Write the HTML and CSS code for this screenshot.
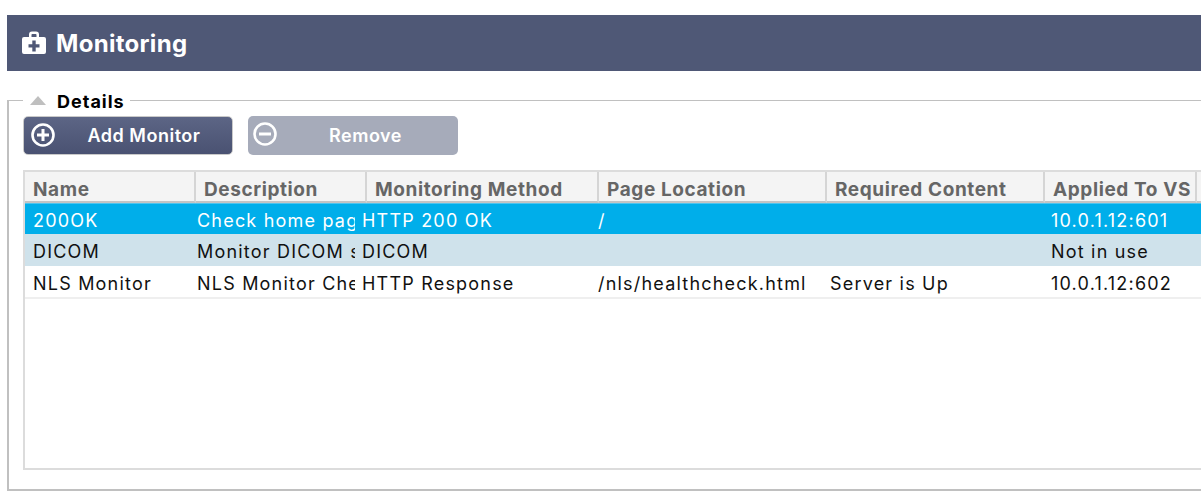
FILE: index.html
```html
<!DOCTYPE html>
<html lang="en">
<head>
<meta charset="utf-8">
<title>Monitoring</title>
<link rel="stylesheet" href="styles.css">
</head>
<body>
<header class="title-bar">
  <svg class="title-icon" viewBox="0 0 24 24" width="24" height="24"><path fill="#fff" fill-rule="evenodd" d="M7 3.500A3 3 0 0 1 10 .5h4a3 3 0 0 1 3 3V6h5a2 2 0 0 1 2 2v13a2 2 0 0 1-2 2H2a2 2 0 0 1-2-2V8a2 2 0 0 1 2-2h5V3.500zM9.500 6h5V3.800a.8.8 0 0 0-.8-.8h-3.400a.8.8 0 0 0-.8.8V6zM10.300 9.500v3.700H6.500v3.400h3.800v3.900h3.400v-3.900h3.800v-3.400h-3.800V9.500h-3.400z"/></svg>
  <h1 class="title-text">Monitoring</h1>
</header>
<fieldset class="details">
  <legend class="details-legend"><span class="arrow"></span><span class="legend-text">Details</span></legend>
  <div class="toolbar">
    <button class="btn btn-primary" type="button">
      <svg class="btn-icon" viewBox="0 0 24 24" width="24" height="24"><circle cx="12" cy="12" r="10.500" fill="none" stroke="#fff" stroke-width="2.600"/><path d="M12 6v12M6 12h12" stroke="#fff" stroke-width="3" fill="none"/></svg>
      <span class="btn-label add-label">Add Monitor</span>
    </button>
    <button class="btn btn-disabled" type="button">
      <svg class="btn-icon" viewBox="0 0 24 24" width="24" height="24"><circle cx="12" cy="12" r="10.500" fill="none" stroke="#fff" stroke-width="2.600"/><path d="M6 12h12" stroke="#fff" stroke-width="3" fill="none"/></svg>
      <span class="btn-label remove-label">Remove</span>
    </button>
  </div>
  <div class="grid-box">
    <table class="grid grid-head">
      <colgroup>
        <col class="h1"><col class="h2"><col class="h3"><col class="h4"><col class="h5"><col class="h6"><col class="h7">
      </colgroup>
      <thead>
        <tr><th>Name</th><th>Description</th><th>Monitoring Method</th><th>Page Location</th><th>Required Content</th><th>Applied To VS</th><th></th></tr>
      </thead>
    </table>
    <table class="grid grid-body">
      <colgroup>
        <col class="b1"><col class="b2"><col class="b3"><col class="b4"><col class="b5"><col class="b6">
      </colgroup>
      <tbody>
        <tr class="selected"><td>200OK</td><td>Check home page</td><td>HTTP 200 OK</td><td>/</td><td></td><td>10.0.1.12:601</td></tr>
        <tr class="alt"><td>DICOM</td><td>Monitor DICOM service</td><td>DICOM</td><td></td><td></td><td>Not in use</td></tr>
        <tr><td>NLS Monitor</td><td>NLS Monitor Check</td><td>HTTP Response</td><td>/nls/healthcheck.html</td><td>Server is Up</td><td>10.0.1.12:602</td></tr>
      </tbody>
    </table>
  </div>
</fieldset>
</body>
</html>
```
FILE: styles.css
```css
html, body {
  margin: 0;
  padding: 0;
  height: 502px;
  overflow: hidden;
  background: #fff;
  font-family: "Inter", "Liberation Sans", sans-serif;
}
body {
  padding: 15px 0 0 7px;
  box-sizing: border-box;
  width: 1201px;
}
.title-bar {
  display: flex;
  align-items: center;
  height: 56px;
  padding-left: 15px;
  gap: 10px;
  background: #4f5876;
  color: #fff;
}
.title-icon { flex: none; }
.title-text {
  margin: 0;
  font-size: 24px;
  font-weight: 700;
  letter-spacing: 0.3px;
}
.details {
  box-sizing: border-box;
  width: 1300px;
  height: 401px;
  margin: 19px 0 0;
  padding: 0 0 0 14px;
  border: solid #c0c0c0;
  border-width: 1px 0 2px 2px;
}
.details-legend {
  display: flex;
  align-items: center;
  gap: 11px;
  margin-left: 0;
  padding: 0 5px 0 7px;
  height: 20px;
  font-size: 18px;
  font-weight: 700;
  letter-spacing: 1px;
  color: #000;
}
.legend-text { padding-top: 2px; }
.arrow {
  width: 0;
  height: 0;
  border-left: 8px solid transparent;
  border-right: 8px solid transparent;
  border-bottom: 9px solid #bfbfbf;
}
.toolbar {
  display: flex;
  gap: 15px;
  margin: 6px 0 0 0;
}
.btn {
  position: relative;
  display: flex;
  align-items: center;
  justify-content: center;
  box-sizing: border-box;
  width: 210px;
  height: 39px;
  padding: 0;
  border-radius: 5px;
  color: #fff;
  font: 600 18px "Inter", "Liberation Sans", sans-serif;
  letter-spacing: 0.5px;
}
.btn-primary {
  border: 1px solid #c9c9c9;
  background: linear-gradient(#5c6585, #4a5272);
}
.btn-disabled {
  border: 0;
  background: #a6abba;
}
.btn-icon {
  position: absolute;
  left: 7px;
  top: 6px;
}
.btn-disabled .btn-icon { left: 5px; top: 6px; }
.add-label { margin-left: 32px; }
.remove-label { margin-left: 25px; }
.grid-box {
  box-sizing: border-box;
  height: 300px;
  margin-top: 15px;
  border: 2px solid #dcdcdc;
  border-right: 0;
}
.grid {
  table-layout: fixed;
  width: 1180px;
  border-collapse: separate;
  border-spacing: 0;
}
.h1 { width: 171px; }
.h2 { width: 171px; }
.h3 { width: 232px; }
.h4 { width: 228px; }
.h5 { width: 218px; }
.h6 { width: 152px; }
.h7 { width: 8px; }
.b1 { width: 172px; }
.b2 { width: 158px; }
.b3 { width: 243px; }
.b4 { width: 232px; }
.b5 { width: 221px; }
.b6 { width: 154px; }
.grid th {
  box-sizing: border-box;
  height: 31px;
  padding: 5px 0 0 8px;
  background: #f4f4f4;
  border-right: 2px solid #d5d5d5;
  border-bottom: 2px solid #c4c4c4;
  color: #666;
  font-size: 19px;
  font-weight: 700;
  letter-spacing: 0.6px;
  text-align: left;
  white-space: nowrap;
  overflow: hidden;
}
.grid td {
  box-sizing: border-box;
  height: 32px;
  padding: 3px 0 0;
  white-space: nowrap;
  overflow: hidden;
  color: #111;
  font-size: 18px;
  font-weight: 400;
  letter-spacing: 1.2px;
  border-bottom: 2px solid #efefef;
}
.grid td:first-child { padding-left: 8px; }
.grid td:nth-child(3) { padding-left: 7px; }
.selected td {
  height: 31px;
  background: #00aeea;
  color: #fff;
  border-bottom: 0;
  border-top: 1px solid #4dc4ee;
}
.alt td {
  height: 33px;
  background: #cfe2eb;
  border-bottom: 1px solid #fff;
}
```
